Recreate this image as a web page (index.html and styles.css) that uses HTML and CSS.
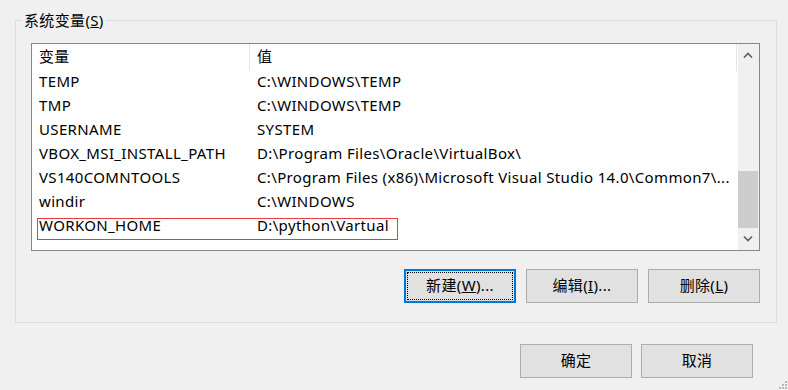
FILE: index.html
```html
<!DOCTYPE html>
<html lang="zh-CN">
<head>
    <meta charset="UTF-8">
    <meta name="viewport" content="width=device-width, initial-scale=1.0">
    <title>环境变量</title>
    <link rel="stylesheet" href="styles.css">
</head>
<body>
    <div class="dialog">
        <fieldset class="group">
            <legend>系统变量(<u>S</u>)</legend>
            <div class="group-body">
                <div class="listbox">
                    <div class="list">
                        <div class="list-head">
                            <span class="col-name">变量</span>
                            <span class="col-value">值</span>
                        </div>
                        <div class="row"><span class="col-name">TEMP</span><span class="col-value">C:\WINDOWS\TEMP</span></div>
                        <div class="row"><span class="col-name">TMP</span><span class="col-value">C:\WINDOWS\TEMP</span></div>
                        <div class="row"><span class="col-name">USERNAME</span><span class="col-value">SYSTEM</span></div>
                        <div class="row"><span class="col-name">VBOX_MSI_INSTALL_PATH</span><span class="col-value">D:\Program Files\Oracle\VirtualBox\</span></div>
                        <div class="row"><span class="col-name">VS140COMNTOOLS</span><span class="col-value">C:\Program Files (x86)\Microsoft Visual Studio 14.0\Common7\...</span></div>
                        <div class="row"><span class="col-name">windir</span><span class="col-value">C:\WINDOWS</span></div>
                        <div class="row marked"><span class="col-name">WORKON_HOME</span><span class="col-value">D:\python\Vartual</span></div>
                    </div>
                    <div class="scrollbar">
                        <div class="arrow">
                            <svg width="10" height="6" viewBox="0 0 10 6"><path d="M1 5.5 L5 1.5 L9 5.5" fill="none" stroke="#606060" stroke-width="1.6"/></svg>
                        </div>
                        <div class="track"><div class="thumb"></div></div>
                        <div class="arrow">
                            <svg width="10" height="6" viewBox="0 0 10 6"><path d="M1 0.5 L5 4.5 L9 0.5" fill="none" stroke="#606060" stroke-width="1.6"/></svg>
                        </div>
                    </div>
                </div>
                <div class="actions">
                    <button class="btn focused">新建(<u>W</u>)...</button>
                    <button class="btn">编辑(<u>I</u>)...</button>
                    <button class="btn">删除(<u>L</u>)</button>
                </div>
            </div>
        </fieldset>
        <div class="footer">
            <button class="btn">确定</button>
            <button class="btn">取消</button>
        </div>
        <svg class="grip" width="10" height="10" viewBox="0 0 10 10">
            <rect x="7" y="1" width="2" height="2" fill="#b8b8b8"/>
            <rect x="4" y="4" width="2" height="2" fill="#b8b8b8"/>
            <rect x="7" y="4" width="2" height="2" fill="#b8b8b8"/>
            <rect x="1" y="7" width="2" height="2" fill="#b8b8b8"/>
            <rect x="4" y="7" width="2" height="2" fill="#b8b8b8"/>
            <rect x="7" y="7" width="2" height="2" fill="#b8b8b8"/>
        </svg>
    </div>
</body>
</html>
```

FILE: styles.css
```css
body {
    margin: 0;
    background-color: #f0f0f0;
    font-family: "Noto Sans", "Noto Sans CJK SC", sans-serif;
    font-size: 15px;
    letter-spacing: 0.35px;
    color: #000;
}
.dialog {
    position: relative;
    width: 788px;
    height: 390px;
    padding-top: 10px;
    box-sizing: border-box;
}
.group {
    margin: 0 0 0 15px;
    padding: 0;
    width: 762px;
    box-sizing: border-box;
    border: 1px solid #dcdcdc;
}
.group legend {
    margin-left: 6px;
    padding: 0 2px;
    line-height: 21px;
}
.group-body {
    padding: 12px 16px 19px 15px;
}
.listbox {
    display: flex;
    height: 208px;
    box-sizing: border-box;
    border: 1px solid #828790;
    background-color: #fff;
}
.list {
    width: 706px;
}
.list-head {
    display: flex;
    height: 27px;
}
.list-head span {
    line-height: 25px;
    box-sizing: border-box;
    border-right: 1px solid #e5e5e5;
}
.list-head .col-value {
    width: 487px;
}
.row {
    position: relative;
    display: flex;
    height: 24px;
    line-height: 21px;
    white-space: nowrap;
}
.col-name {
    width: 218px;
    padding-left: 7px;
    box-sizing: border-box;
}
.col-value {
    padding-left: 7px;
}
.marked::after {
    content: "";
    position: absolute;
    left: 5px;
    top: 3px;
    width: 361px;
    height: 22px;
    box-sizing: border-box;
    border: 1px solid #ec3a3f;
}
.scrollbar {
    display: flex;
    flex-direction: column;
    width: 21px;
    background-color: #f0f0f0;
}
.arrow {
    height: 22px;
    display: flex;
    justify-content: center;
    align-items: center;
    padding-right: 1px;
}
.track {
    flex: 1;
    display: flex;
    flex-direction: column;
    justify-content: flex-end;
}
.thumb {
    height: 57px;
    width: 20px;
    background-color: #cdcdcd;
}
.actions {
    display: flex;
    justify-content: flex-end;
    gap: 10px;
    margin-top: 18px;
}
.btn {
    width: 112px;
    height: 34px;
    padding: 0 0 3px;
    border: 1px solid #adadad;
    background-color: #e1e1e1;
    font-family: inherit;
    font-size: 15px;
    letter-spacing: 0.35px;
    color: #000;
}
.btn.focused {
    border: 2px solid #0078d7;
    outline: 1px dotted #000;
    outline-offset: -4px;
}
.footer {
    display: flex;
    justify-content: flex-end;
    gap: 9px;
    margin: 21px 35px 0 0;
}
.grip {
    position: absolute;
    right: 0;
    bottom: 0;
}
```
